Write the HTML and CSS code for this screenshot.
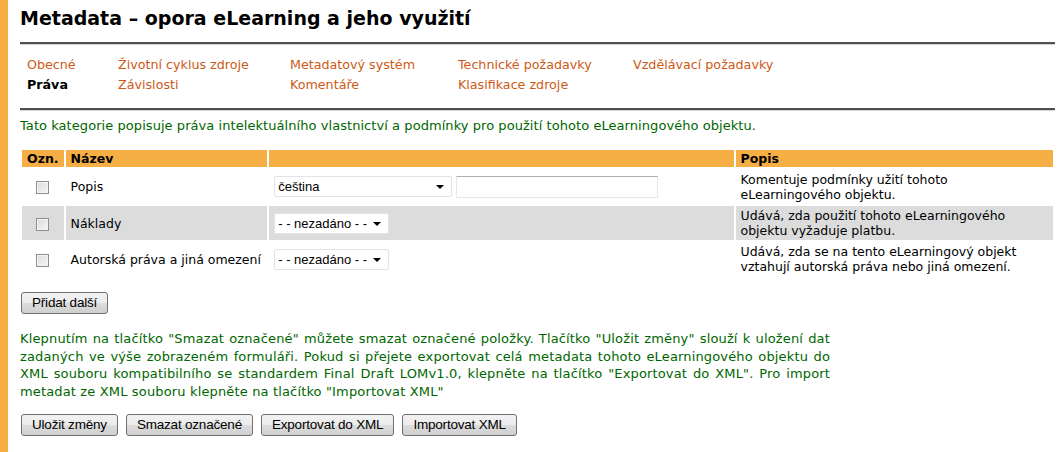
FILE: index.html
```html
<!DOCTYPE html>
<html lang="cs">
<head>
<meta charset="utf-8">
<title>Metadata – opora eLearning a jeho využití</title>
<link rel="stylesheet" href="styles.css">
</head>
<body>
<div class="page">
  <h1 class="title">Metadata – opora eLearning a jeho využití</h1>
  <div class="rule"></div>
  <nav class="tabs">
    <a class="tab" href="#">Obecné</a>
    <a class="tab" href="#">Životní cyklus zdroje</a>
    <a class="tab" href="#">Metadatový systém</a>
    <a class="tab" href="#">Technické požadavky</a>
    <a class="tab" href="#">Vzdělávací požadavky</a>
    <span class="tab active">Práva</span>
    <a class="tab" href="#">Závislosti</a>
    <a class="tab" href="#">Komentáře</a>
    <a class="tab" href="#">Klasifikace zdroje</a>
  </nav>
  <div class="rule"></div>
  <p class="intro">Tato kategorie popisuje práva intelektuálního vlastnictví a podmínky pro použití tohoto eLearningového objektu.</p>

  <table class="grid">
    <colgroup>
      <col class="c-mark"><col class="c-name"><col class="c-value"><col class="c-desc">
    </colgroup>
    <thead>
      <tr><th>Ozn.</th><th>Název</th><th></th><th>Popis</th></tr>
    </thead>
    <tbody>
      <tr class="first">
        <td class="mark"><span class="check"></span></td>
        <td>Popis</td>
        <td><span class="sel sel-wide">čeština</span> <span class="field"></span></td>
        <td class="desc">Komentuje podmínky užití tohoto eLearningového objektu.</td>
      </tr>
      <tr class="alt">
        <td class="mark"><span class="check"></span></td>
        <td>Náklady</td>
        <td><span class="sel">- - nezadáno - -</span></td>
        <td class="desc">Udává, zda použití tohoto eLearningového objektu vyžaduje platbu.</td>
      </tr>
      <tr>
        <td class="mark"><span class="check"></span></td>
        <td>Autorská práva a jiná omezení</td>
        <td><span class="sel">- - nezadáno - -</span></td>
        <td class="desc">Udává, zda se na tento eLearningový objekt vztahují autorská práva nebo jiná omezení.</td>
      </tr>
    </tbody>
  </table>

  <div class="add-row"><button class="btn" type="button">Přidat další</button></div>

  <p class="help">Klepnutím na tlačítko "Smazat označené" můžete smazat označené položky. Tlačítko "Uložit změny" slouží k uložení dat zadaných ve výše zobrazeném formuláři. Pokud si přejete exportovat celá metadata tohoto eLearningového objektu do XML souboru kompatibilního se standardem Final Draft LOMv1.0, klepněte na tlačítko "Exportovat do XML". Pro import metadat ze XML souboru klepněte na tlačítko "Importovat XML"</p>

  <div class="actions">
    <button class="btn" type="button">Uložit změny</button>
    <button class="btn" type="button">Smazat označené</button>
    <button class="btn" type="button">Exportovat do XML</button>
    <button class="btn" type="button">Importovat XML</button>
  </div>
</div>
</body>
</html>
```

FILE: styles.css
```css
html, body {
  margin: 0;
  padding: 0;
  background: #ffffff;
}

body {
  font-family: "DejaVu Sans", Verdana, sans-serif;
  font-size: 12.5px;
  color: #000;
}

.page {
  min-height: 452px;
  box-sizing: border-box;
  border-left: 8px solid #f5af45;
  padding: 0 8px 0 12px;
}

.title {
  margin: 0;
  padding-top: 6px;
  font-size: 19px;
  line-height: 24px;
  font-weight: bold;
  color: #000;
}

.rule {
  margin-top: 12px;
  border-top: 2px solid #505050;
  border-bottom: 1px solid #d4d4d4;
}

.tabs {
  display: grid;
  grid-template-columns: 91px 172px 168px 175px auto;
  grid-auto-rows: 20px;
  align-items: center;
  padding: 9px 0 6px 7px;
  font-size: 12.7px;
}

.tabs + .rule {
  margin-top: 8px;
}

.tab {
  color: #cc5a16;
  text-decoration: none;
  white-space: nowrap;
}

.tab.active {
  color: #000;
  font-weight: bold;
}

.intro {
  margin: 6px 0 0;
  font-size: 13px;
  letter-spacing: 0.06px;
  line-height: 18px;
  color: #006600;
}

.grid {
  margin-top: 13px;
  width: 100%;
  border-collapse: separate;
  border-spacing: 2px;
}

.c-mark { width: 40px; }
.c-name { width: 202px; }
.c-value { width: 465px; }
.c-desc { width: 318px; }

.grid th {
  background: #f5af45;
  height: 17px;
  padding: 0 5px;
  text-align: left;
  font-weight: bold;
  line-height: 17px;
}

.grid td {
  padding: 2px 5px;
  vertical-align: middle;
  line-height: 15px;
}

.grid tbody tr {
  height: 34px;
}

.grid tbody tr.first {
  height: 35px;
}

.grid tr.alt td {
  background: #dcdcdc;
}

.grid td.mark {
  text-align: center;
  padding: 0;
}

.check {
  display: inline-block;
  width: 11px;
  height: 11px;
  border: 1px solid #8e8f8f;
  background: linear-gradient(135deg, #dcdcdc, #f6f6f6);
  box-shadow: inset 0 0 0 1px #f4f4f4;
  vertical-align: middle;
}

.desc {
  font-size: 12.5px;
}

.sel {
  display: inline-block;
  position: relative;
  box-sizing: border-box;
  height: 21px;
  line-height: 19px;
  width: 115px;
  padding: 0 20px 0 3px;
  border: 1px solid #e2e3ea;
  border-radius: 2px;
  background: #fff;
  vertical-align: middle;
  white-space: nowrap;
  font-family: "Liberation Sans", Arial, sans-serif;
  font-size: 13px;
}

.sel::after {
  content: "";
  position: absolute;
  right: 7px;
  top: 8px;
  border-left: 4px solid transparent;
  border-right: 4px solid transparent;
  border-top: 4px solid #000;
}

.sel-wide {
  width: 178px;
}

.field {
  display: inline-block;
  box-sizing: border-box;
  width: 202px;
  height: 22px;
  border: 1px solid #e3e9ef;
  border-top-color: #abadb3;
  background: #fff;
  vertical-align: middle;
}

.add-row {
  margin-top: 14px;
}

.btn {
  box-sizing: border-box;
  height: 22px;
  margin: 0 0 0 1px;
  padding: 0 10px;
  border: 1px solid #707070;
  border-radius: 3px;
  background: linear-gradient(#f2f2f2 0%, #ebebeb 50%, #dddddd 51%, #cfcfcf 100%);
  font-family: "Liberation Sans", Arial, sans-serif;
  font-size: 13.5px;
  color: #000;
  line-height: 20px;
  letter-spacing: -0.2px;
}

.help {
  margin: 16px 0 0;
  width: 810px;
  font-size: 13px;
  letter-spacing: 0.15px;
  text-align: justify;
  line-height: 17.5px;
  color: #006600;
}

.actions {
  display: flex;
  gap: 7px;
  margin-top: 14px;
}
```
